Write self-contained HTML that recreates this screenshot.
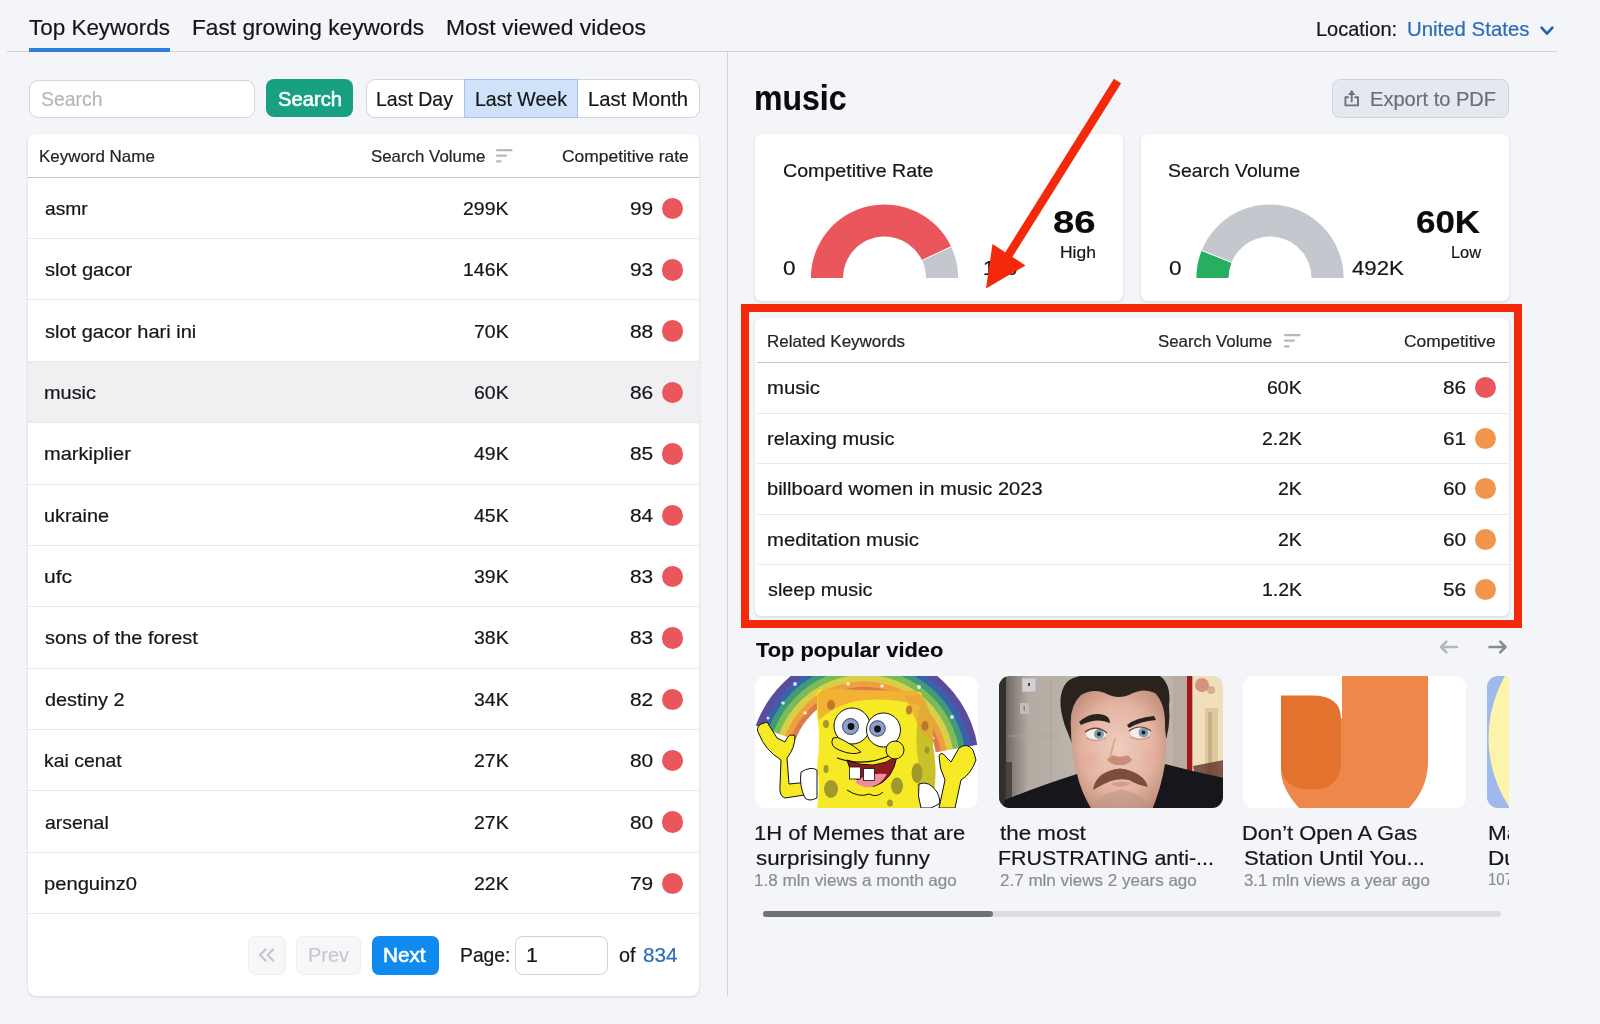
<!DOCTYPE html>
<html lang="en"><head><meta charset="utf-8"><title>Keyword Analytics</title>
<style>
html,body{margin:0;padding:0}
body{width:1600px;height:1024px;overflow:hidden;background:#f4f5f9;font-family:"Liberation Sans", sans-serif;position:relative}
#root{position:absolute;left:0;top:0;width:1600px;height:1024px;overflow:hidden}
#root>div,#root>svg,#root>span{position:absolute;box-sizing:border-box}
.t{white-space:pre;display:block;transform-origin:0 50%;-webkit-text-stroke:0.2px currentColor}
</style></head><body><div id="root">
<div style="left:7px;top:51px;width:1550px;height:1px;background:#cfd1d6"></div>
<div style="left:29px;top:48px;width:141px;height:4px;background:#2b7fd9"></div>
<span class="t" style="left:29.00px;top:13px;font-size:21.95px;line-height:29px;color:#15161a;transform:scaleX(1.0231);">Top Keywords</span>
<span class="t" style="left:191.97px;top:13px;font-size:21.95px;line-height:29px;color:#15161a;transform:scaleX(1.0342);">Fast growing keywords</span>
<span class="t" style="left:445.96px;top:13px;font-size:21.95px;line-height:29px;color:#15161a;transform:scaleX(1.0448);">Most viewed videos</span>
<span class="t" style="left:1316.49px;top:16px;font-size:19.85px;line-height:26px;color:#15161a;transform:scaleX(1.0061);">Location:</span>
<span class="t" style="left:1407.47px;top:16px;font-size:19.85px;line-height:26px;color:#2b6cb5;transform:scaleX(1.0278);">United States</span>
<svg style="left:1539px;top:23.800px" width="16" height="14" viewBox="0 0 16 14"><path d="M2.6 3.6 L8 9.6 L13.4 3.6" fill="none" stroke="#1f62b0" stroke-width="2.6" stroke-linecap="round" stroke-linejoin="round"/></svg>
<div style="left:727px;top:52px;width:1px;height:944px;background:#d4d6db"></div>
<div style="left:28.5px;top:79.5px;width:226px;height:38px;background:#fff;border:1px solid #d3d5da;border-radius:9px"></div>
<span class="t" style="left:41.00px;top:86px;font-size:19.85px;line-height:26px;color:#b4b6bc;transform:scaleX(0.9784);">Search</span>
<div style="left:266px;top:79.2px;width:86.5px;height:38.3px;background:#17a081;border-radius:8px"></div>
<span class="t" style="left:277.50px;top:86px;font-size:19.85px;line-height:26px;color:#fff;transform:scaleX(1.0188);-webkit-text-stroke:0.55px currentColor;">Search</span>
<div style="left:365.5px;top:79px;width:334px;height:38.5px;background:#fff;border:1px solid #d3d5da;border-radius:9px"></div>
<div style="left:464px;top:79px;width:114px;height:38.5px;background:#cfe2fa;border:1px solid #a4c3ee"></div>
<span class="t" style="left:376.02px;top:86px;font-size:19.85px;line-height:26px;color:#15161a;transform:scaleX(0.9821);">Last Day</span>
<span class="t" style="left:474.52px;top:86px;font-size:19.85px;line-height:26px;color:#15161a;transform:scaleX(0.9842);">Last Week</span>
<span class="t" style="left:588.48px;top:86px;font-size:19.85px;line-height:26px;color:#15161a;transform:scaleX(1.0194);">Last Month</span>
<div style="left:28px;top:134px;width:671.4px;height:862px;background:#fff;border-radius:6px 6px 8px 8px;box-shadow:0 1px 3px rgba(20,25,40,.12),0 0 1px rgba(20,25,40,.12)"></div>
<span class="t" style="left:38.99px;top:146px;font-size:16.72px;line-height:22px;color:#22242a;transform:scaleX(1.0142);">Keyword Name</span>
<span class="t" style="left:370.50px;top:146px;font-size:16.72px;line-height:22px;color:#22242a;transform:scaleX(1.0090);">Search Volume</span>
<span class="t" style="left:561.50px;top:146px;font-size:16.72px;line-height:22px;color:#22242a;transform:scaleX(1.0427);">Competitive rate</span>
<svg style="left:496px;top:149px" width="17" height="14" viewBox="0 0 17 14"><g fill="#b6b8c0"><rect x="0" y="0" width="16.5" height="2.2" rx="1"/><rect x="0" y="5.6" width="11" height="2.2" rx="1"/><rect x="0" y="11.2" width="5.5" height="2.2" rx="1"/></g></svg>
<div style="left:28px;top:176.5px;width:671.4px;height:1px;background:#c3c4c8"></div>
<div style="left:28px;top:238.1px;width:671.4px;height:1px;background:#e7e8eb"></div>
<span class="t" style="left:45.00px;top:197px;font-size:18.81px;line-height:24px;color:#15161a;transform:scaleX(1.0238);">asmr</span>
<span class="t" style="left:463.09px;top:197px;font-size:18.81px;line-height:24px;color:#15161a;transform:scaleX(1.0350);">299K</span>
<span class="t" style="left:629.80px;top:197px;font-size:18.81px;line-height:24px;color:#15161a;transform:scaleX(1.1100);">99</span>
<div style="left:661.5px;top:197.73px;width:21.5px;height:21.5px;background:#e9565c;border-radius:50%"></div>
<div style="left:28px;top:299.4px;width:671.4px;height:1px;background:#e7e8eb"></div>
<span class="t" style="left:45.00px;top:258px;font-size:18.81px;line-height:24px;color:#15161a;transform:scaleX(1.0710);">slot gacor</span>
<span class="t" style="left:463.09px;top:258px;font-size:18.81px;line-height:24px;color:#15161a;transform:scaleX(1.0350);">146K</span>
<span class="t" style="left:629.80px;top:258px;font-size:18.81px;line-height:24px;color:#15161a;transform:scaleX(1.1100);">93</span>
<div style="left:661.5px;top:259.09px;width:21.5px;height:21.5px;background:#e9565c;border-radius:50%"></div>
<div style="left:28px;top:360.8px;width:671.4px;height:1px;background:#e7e8eb"></div>
<span class="t" style="left:45.00px;top:320px;font-size:18.81px;line-height:24px;color:#15161a;transform:scaleX(1.0645);">slot gacor hari ini</span>
<span class="t" style="left:473.91px;top:320px;font-size:18.81px;line-height:24px;color:#15161a;transform:scaleX(1.0350);">70K</span>
<span class="t" style="left:629.80px;top:320px;font-size:18.81px;line-height:24px;color:#15161a;transform:scaleX(1.1100);">88</span>
<div style="left:661.5px;top:320.45px;width:21.5px;height:21.5px;background:#e9565c;border-radius:50%"></div>
<div style="left:28px;top:361.6px;width:671.4px;height:61.4px;background:#f0f0f3"></div>
<div style="left:28px;top:422.1px;width:671.4px;height:1px;background:#e7e8eb"></div>
<span class="t" style="left:43.94px;top:381px;font-size:18.81px;line-height:24px;color:#15161a;transform:scaleX(1.0590);">music</span>
<span class="t" style="left:473.91px;top:381px;font-size:18.81px;line-height:24px;color:#15161a;transform:scaleX(1.0350);">60K</span>
<span class="t" style="left:629.80px;top:381px;font-size:18.81px;line-height:24px;color:#15161a;transform:scaleX(1.1100);">86</span>
<div style="left:661.5px;top:381.81px;width:21.5px;height:21.5px;background:#e9565c;border-radius:50%"></div>
<div style="left:28px;top:483.5px;width:671.4px;height:1px;background:#e7e8eb"></div>
<span class="t" style="left:43.93px;top:442px;font-size:18.81px;line-height:24px;color:#15161a;transform:scaleX(1.0660);">markiplier</span>
<span class="t" style="left:473.91px;top:442px;font-size:18.81px;line-height:24px;color:#15161a;transform:scaleX(1.0350);">49K</span>
<span class="t" style="left:629.80px;top:442px;font-size:18.81px;line-height:24px;color:#15161a;transform:scaleX(1.1100);">85</span>
<div style="left:661.5px;top:443.17px;width:21.5px;height:21.5px;background:#e9565c;border-radius:50%"></div>
<div style="left:28px;top:544.9px;width:671.4px;height:1px;background:#e7e8eb"></div>
<span class="t" style="left:43.95px;top:504px;font-size:18.81px;line-height:24px;color:#15161a;transform:scaleX(1.0549);">ukraine</span>
<span class="t" style="left:473.91px;top:504px;font-size:18.81px;line-height:24px;color:#15161a;transform:scaleX(1.0350);">45K</span>
<span class="t" style="left:629.80px;top:504px;font-size:18.81px;line-height:24px;color:#15161a;transform:scaleX(1.1100);">84</span>
<div style="left:661.5px;top:504.53px;width:21.5px;height:21.5px;background:#e9565c;border-radius:50%"></div>
<div style="left:28px;top:606.2px;width:671.4px;height:1px;background:#e7e8eb"></div>
<span class="t" style="left:43.88px;top:565px;font-size:18.81px;line-height:24px;color:#15161a;transform:scaleX(1.1193);">ufc</span>
<span class="t" style="left:473.91px;top:565px;font-size:18.81px;line-height:24px;color:#15161a;transform:scaleX(1.0350);">39K</span>
<span class="t" style="left:629.80px;top:565px;font-size:18.81px;line-height:24px;color:#15161a;transform:scaleX(1.1100);">83</span>
<div style="left:661.5px;top:565.89px;width:21.5px;height:21.5px;background:#e9565c;border-radius:50%"></div>
<div style="left:28px;top:667.6px;width:671.4px;height:1px;background:#e7e8eb"></div>
<span class="t" style="left:45.00px;top:626px;font-size:18.81px;line-height:24px;color:#15161a;transform:scaleX(1.0589);">sons of the forest</span>
<span class="t" style="left:473.91px;top:626px;font-size:18.81px;line-height:24px;color:#15161a;transform:scaleX(1.0350);">38K</span>
<span class="t" style="left:629.80px;top:626px;font-size:18.81px;line-height:24px;color:#15161a;transform:scaleX(1.1100);">83</span>
<div style="left:661.5px;top:627.25px;width:21.5px;height:21.5px;background:#e9565c;border-radius:50%"></div>
<div style="left:28px;top:728.9px;width:671.4px;height:1px;background:#e7e8eb"></div>
<span class="t" style="left:45.00px;top:688px;font-size:18.81px;line-height:24px;color:#15161a;transform:scaleX(1.0564);">destiny 2</span>
<span class="t" style="left:473.91px;top:688px;font-size:18.81px;line-height:24px;color:#15161a;transform:scaleX(1.0350);">34K</span>
<span class="t" style="left:629.80px;top:688px;font-size:18.81px;line-height:24px;color:#15161a;transform:scaleX(1.1100);">82</span>
<div style="left:661.5px;top:688.61px;width:21.5px;height:21.5px;background:#e9565c;border-radius:50%"></div>
<div style="left:28px;top:790.3px;width:671.4px;height:1px;background:#e7e8eb"></div>
<span class="t" style="left:43.97px;top:749px;font-size:18.81px;line-height:24px;color:#15161a;transform:scaleX(1.0332);">kai cenat</span>
<span class="t" style="left:473.91px;top:749px;font-size:18.81px;line-height:24px;color:#15161a;transform:scaleX(1.0350);">27K</span>
<span class="t" style="left:629.80px;top:749px;font-size:18.81px;line-height:24px;color:#15161a;transform:scaleX(1.1100);">80</span>
<div style="left:661.5px;top:749.97px;width:21.5px;height:21.5px;background:#e9565c;border-radius:50%"></div>
<div style="left:28px;top:851.7px;width:671.4px;height:1px;background:#e7e8eb"></div>
<span class="t" style="left:45.00px;top:811px;font-size:18.81px;line-height:24px;color:#15161a;transform:scaleX(1.0335);">arsenal</span>
<span class="t" style="left:473.91px;top:811px;font-size:18.81px;line-height:24px;color:#15161a;transform:scaleX(1.0350);">27K</span>
<span class="t" style="left:629.80px;top:811px;font-size:18.81px;line-height:24px;color:#15161a;transform:scaleX(1.1100);">80</span>
<div style="left:661.5px;top:811.33px;width:21.5px;height:21.5px;background:#e9565c;border-radius:50%"></div>
<div style="left:28px;top:913.0px;width:671.4px;height:1px;background:#e7e8eb"></div>
<span class="t" style="left:43.93px;top:872px;font-size:18.81px;line-height:24px;color:#15161a;transform:scaleX(1.0727);">penguinz0</span>
<span class="t" style="left:473.91px;top:872px;font-size:18.81px;line-height:24px;color:#15161a;transform:scaleX(1.0350);">22K</span>
<span class="t" style="left:629.80px;top:872px;font-size:18.81px;line-height:24px;color:#15161a;transform:scaleX(1.1100);">79</span>
<div style="left:661.5px;top:872.69px;width:21.5px;height:21.5px;background:#e9565c;border-radius:50%"></div>
<div style="left:248px;top:936px;width:37.5px;height:38.5px;background:#f6f7f9;border:1px solid #eeeff2;border-radius:7px"></div>
<svg style="left:257px;top:947px" width="20" height="16" viewBox="0 0 20 16"><path d="M8.6 2.4 L3 8 L8.6 13.6 M16.2 2.4 L10.6 8 L16.2 13.6" fill="none" stroke="#c5c7cd" stroke-width="2.2" stroke-linecap="round" stroke-linejoin="round"/></svg>
<div style="left:296px;top:936px;width:65px;height:38.5px;background:#f6f7f9;border:1px solid #eeeff2;border-radius:7px"></div>
<span class="t" style="left:307.50px;top:942px;font-size:19.85px;line-height:26px;color:#c7c9ce;transform:scaleX(1.0030);">Prev</span>
<div style="left:372px;top:936px;width:66.5px;height:38.5px;background:#0f8bf0;border-radius:7px"></div>
<span class="t" style="left:382.96px;top:942px;font-size:19.85px;line-height:26px;color:#fff;transform:scaleX(1.0425);-webkit-text-stroke:0.55px currentColor;">Next</span>
<span class="t" style="left:459.53px;top:942px;font-size:19.85px;line-height:26px;color:#15161a;transform:scaleX(0.9728);">Page:</span>
<div style="left:515px;top:936px;width:92.5px;height:38.5px;background:#fff;border:1px solid #cfd1d6;border-radius:8px"></div>
<span class="t" style="left:525.92px;top:942px;font-size:19.85px;line-height:26px;color:#15161a;transform:scaleX(1.0800);">1</span>
<span class="t" style="left:619.00px;top:942px;font-size:19.85px;line-height:26px;color:#15161a;transform:scaleX(0.9979);">of</span>
<span class="t" style="left:642.50px;top:942px;font-size:19.85px;line-height:26px;color:#2b6cb5;transform:scaleX(1.0432);">834</span>
<span class="t" style="left:753.64px;top:76px;font-size:34.48px;line-height:45px;color:#0b0b0d;transform:scaleX(0.9287);font-weight:700;">music</span>
<div style="left:1332px;top:79px;width:176.5px;height:38.5px;background:#e6e8ef;border:1px solid #d1d4dc;border-radius:8px"></div>
<svg style="left:1343px;top:89px" width="18" height="19" viewBox="0 0 18 19"><g fill="none" stroke="#6d707b" stroke-width="1.9" stroke-linecap="round" stroke-linejoin="round"><path d="M5.2 8.2 H2.4 V16.4 H15 V8.2 H12.2"/><path d="M8.7 12.4 V2.4"/></g><path d="M4.9 6 L8.7 1.2 L12.5 6 Z" fill="#6d707b"/></svg>
<span class="t" style="left:1370.24px;top:86px;font-size:19.85px;line-height:26px;color:#6c6f7a;transform:scaleX(1.0122);">Export to PDF</span>
<div style="left:755px;top:134px;width:368px;height:166.5px;background:#fff;border-radius:6px;box-shadow:0 1px 3px rgba(20,25,40,.13),0 0 1px rgba(20,25,40,.10)"></div>
<span class="t" style="left:782.50px;top:159px;font-size:18.81px;line-height:24px;color:#15161a;transform:scaleX(1.0437);">Competitive Rate</span>
<svg style="left:0;top:0" width="1600" height="1024" viewBox="0 0 1600 1024"><path d="M810.90 278.00 A73.6 73.6 0 0 1 951.10 246.66 L922.05 260.33 A41.5 41.5 0 0 0 843.00 278.00 Z" fill="#e9575c"/><path d="M951.10 246.66 A73.6 73.6 0 0 1 958.10 278.00 L926.00 278.00 A41.5 41.5 0 0 0 922.05 260.33 Z" fill="#c5c7cf"/><path d="M952.00 246.24 L921.15 260.76" stroke="#fff" stroke-width="1"/></svg>
<span class="t" style="left:783.00px;top:254px;font-size:20.9px;line-height:27px;color:#15161a;transform:scaleX(1.0800);">0</span>
<span class="t" style="left:983.01px;top:254px;font-size:20.9px;line-height:27px;color:#15161a;transform:scaleX(0.9929);">100</span>
<span class="t" style="left:1052.80px;top:202px;font-size:31.87px;line-height:41px;color:#0b0b0d;transform:scaleX(1.2011);font-weight:700;">86</span>
<span class="t" style="left:1059.96px;top:242px;font-size:16.72px;line-height:22px;color:#15161a;transform:scaleX(1.0435);">High</span>
<div style="left:1140.5px;top:134px;width:368.5px;height:166.5px;background:#fff;border-radius:6px;box-shadow:0 1px 3px rgba(20,25,40,.13),0 0 1px rgba(20,25,40,.10)"></div>
<span class="t" style="left:1168.00px;top:159px;font-size:18.81px;line-height:24px;color:#15161a;transform:scaleX(1.0353);">Search Volume</span>
<svg style="left:0;top:0" width="1600" height="1024" viewBox="0 0 1600 1024"><path d="M1196.40 278.00 A73.6 73.6 0 0 1 1201.74 250.49 L1231.51 262.49 A41.5 41.5 0 0 0 1228.50 278.00 Z" fill="#27ae60"/><path d="M1201.74 250.49 A73.6 73.6 0 0 1 1343.60 278.00 L1311.50 278.00 A41.5 41.5 0 0 0 1231.51 262.49 Z" fill="#c5c7cf"/><path d="M1200.81 250.11 L1232.44 262.86" stroke="#fff" stroke-width="1"/></svg>
<span class="t" style="left:1169.00px;top:254px;font-size:20.9px;line-height:27px;color:#15161a;transform:scaleX(1.0800);">0</span>
<span class="t" style="left:1352.00px;top:254px;font-size:20.9px;line-height:27px;color:#15161a;transform:scaleX(1.0644);">492K</span>
<span class="t" style="left:1416.40px;top:202px;font-size:31.87px;line-height:41px;color:#0b0b0d;transform:scaleX(1.0968);font-weight:700;">60K</span>
<span class="t" style="left:1450.52px;top:242px;font-size:16.72px;line-height:22px;color:#15161a;transform:scaleX(0.9811);">Low</span>
<div style="left:755px;top:318px;width:753.8px;height:297.5px;background:#fff;border-radius:6px;box-shadow:0 1px 3px rgba(20,25,40,.13),0 0 1px rgba(20,25,40,.10)"></div>
<span class="t" style="left:766.91px;top:332px;font-size:15.67px;line-height:20px;color:#22242a;transform:scaleX(1.0854);">Related Keywords</span>
<span class="t" style="left:1158.00px;top:332px;font-size:15.67px;line-height:20px;color:#22242a;transform:scaleX(1.0754);">Search Volume</span>
<svg style="left:1284px;top:334px" width="17" height="14" viewBox="0 0 17 14"><g fill="#b6b8c0"><rect x="0" y="0" width="16.5" height="2.2" rx="1"/><rect x="0" y="5.6" width="11" height="2.2" rx="1"/><rect x="0" y="11.2" width="5.5" height="2.2" rx="1"/></g></svg>
<span class="t" style="left:1404.00px;top:332px;font-size:15.67px;line-height:20px;color:#22242a;transform:scaleX(1.1090);">Competitive</span>
<div style="left:756.5px;top:361.5px;width:751px;height:1px;background:#c3c4c8"></div>
<div style="left:756.5px;top:412.6px;width:751px;height:1px;background:#e7e8eb"></div>
<span class="t" style="left:766.92px;top:376px;font-size:18.81px;line-height:24px;color:#15161a;transform:scaleX(1.0800);">music</span>
<span class="t" style="left:1267.41px;top:376px;font-size:18.81px;line-height:24px;color:#15161a;transform:scaleX(1.0350);">60K</span>
<span class="t" style="left:1442.80px;top:376px;font-size:18.81px;line-height:24px;color:#15161a;transform:scaleX(1.1100);">86</span>
<div style="left:1475px;top:377.45px;width:21px;height:21px;background:#e9565c;border-radius:50%"></div>
<div style="left:756.5px;top:463.1px;width:751px;height:1px;background:#e7e8eb"></div>
<span class="t" style="left:766.94px;top:427px;font-size:18.81px;line-height:24px;color:#15161a;transform:scaleX(1.0612);">relaxing music</span>
<span class="t" style="left:1262.00px;top:427px;font-size:18.81px;line-height:24px;color:#15161a;transform:scaleX(1.0350);">2.2K</span>
<span class="t" style="left:1442.80px;top:427px;font-size:18.81px;line-height:24px;color:#15161a;transform:scaleX(1.1100);">61</span>
<div style="left:1475px;top:427.95px;width:21px;height:21px;background:#f0954b;border-radius:50%"></div>
<div style="left:756.5px;top:513.6px;width:751px;height:1px;background:#e7e8eb"></div>
<span class="t" style="left:766.93px;top:477px;font-size:18.81px;line-height:24px;color:#15161a;transform:scaleX(1.0677);">billboard women in music 2023</span>
<span class="t" style="left:1278.23px;top:477px;font-size:18.81px;line-height:24px;color:#15161a;transform:scaleX(1.0350);">2K</span>
<span class="t" style="left:1442.80px;top:477px;font-size:18.81px;line-height:24px;color:#15161a;transform:scaleX(1.1100);">60</span>
<div style="left:1475px;top:478.45px;width:21px;height:21px;background:#f0954b;border-radius:50%"></div>
<div style="left:756.5px;top:564.1px;width:751px;height:1px;background:#e7e8eb"></div>
<span class="t" style="left:766.92px;top:528px;font-size:18.81px;line-height:24px;color:#15161a;transform:scaleX(1.0778);">meditation music</span>
<span class="t" style="left:1278.23px;top:528px;font-size:18.81px;line-height:24px;color:#15161a;transform:scaleX(1.0350);">2K</span>
<span class="t" style="left:1442.80px;top:528px;font-size:18.81px;line-height:24px;color:#15161a;transform:scaleX(1.1100);">60</span>
<div style="left:1475px;top:528.95px;width:21px;height:21px;background:#f0954b;border-radius:50%"></div>
<span class="t" style="left:768.00px;top:578px;font-size:18.81px;line-height:24px;color:#15161a;transform:scaleX(1.0522);">sleep music</span>
<span class="t" style="left:1262.00px;top:578px;font-size:18.81px;line-height:24px;color:#15161a;transform:scaleX(1.0350);">1.2K</span>
<span class="t" style="left:1442.80px;top:578px;font-size:18.81px;line-height:24px;color:#15161a;transform:scaleX(1.1100);">56</span>
<div style="left:1475px;top:579.45px;width:21px;height:21px;background:#f0954b;border-radius:50%"></div>
<div style="left:740.5px;top:304.3px;width:781.5px;height:323.7px;border:8px solid #f4280b"></div>
<svg style="left:0;top:0" width="1600" height="1024" viewBox="0 0 1600 1024"><path d="M1117.5 81 L1008 256" stroke="#f4280b" stroke-width="8.5" fill="none"/><path d="M986 288.5 L992.5 244 L1025.5 265.5 Z" fill="#f4280b"/></svg>
<span class="t" style="left:755.50px;top:636px;font-size:20.9px;line-height:27px;color:#0b0b0d;transform:scaleX(1.0434);font-weight:700;">Top popular video</span>
<svg style="left:1438px;top:638px" width="72" height="18" viewBox="0 0 72 18"><g fill="none" stroke-width="2.6" stroke-linecap="round" stroke-linejoin="round"><path d="M19 9 H3 M8.300 3.700 L3 9 L8.300 14.300" stroke="#b3b6be"/><path d="M51.500 9 H67.500 M62.200 3.700 L67.500 9 L62.200 14.300" stroke="#888b94"/></g></svg>
<div style="left:755px;top:676px;width:223px;height:131.5px;overflow:hidden;border-radius:11px;background:#fff"><svg width="223" height="131.5" viewBox="0 0 223 131.5" style="display:block">
<rect width="223" height="132" fill="#fff"/>
<defs><clipPath id="rb"><path d="M109 89 L-13 44.500 L-13 -20 L237 -20 L237 66.400 Z"/></clipPath></defs>
<g clip-path="url(#rb)">
<circle cx="109" cy="89" r="111.5" fill="none" stroke="#5a4c9e" stroke-width="7.4"/>
<circle cx="109" cy="89" r="105" fill="none" stroke="#3763ad" stroke-width="6.6"/>
<circle cx="109" cy="89" r="99" fill="none" stroke="#3f9a76" stroke-width="6.2"/>
<circle cx="109" cy="89" r="93" fill="none" stroke="#7dbb55" stroke-width="6.2"/>
<circle cx="109" cy="89" r="87" fill="none" stroke="#d9cf45" stroke-width="6.2"/>
<circle cx="109" cy="89" r="81" fill="none" stroke="#f0a03a" stroke-width="6.2"/>
<circle cx="109" cy="89" r="75.5" fill="none" stroke="#d97b4a" stroke-width="5.5"/>
</g>
<g fill="#fff" opacity=".8"><circle cx="40" cy="8" r="2"/><circle cx="28" cy="27" r="1.8"/><circle cx="50" cy="37" r="1.8"/><circle cx="93" cy="8" r="1.8"/><circle cx="127" cy="10" r="1.8"/><circle cx="164" cy="11" r="2"/><circle cx="197" cy="41" r="2"/><circle cx="152" cy="29" r="1.8"/><circle cx="13" cy="42" r="1.5"/><circle cx="178" cy="62" r="1.6"/></g>
<path d="M166 18 Q180 40 178 70 Q184 100 176 132 L150 132 L150 18 Z" fill="#c9c12a"/>
<path d="M62 22 Q60 12 70 13 L160 16 Q170 14 166 26 Q158 60 164 90 Q160 115 166 132 L62 132 Q66 110 62 92 Q66 60 62 40 Z" fill="#f6ea26"/>
<path d="M62 20 Q66 10 80 13 L160 15 Q168 16 166 30 Q140 22 110 24 Q84 26 64 44 Z" fill="#f0a03a" opacity=".75"/>
<path d="M150 20 L166 18 Q180 40 178 66 L166 56 Z" fill="#e9a23a" opacity=".7"/>
<g fill="#a09a2e"><ellipse cx="76" cy="113" rx="7" ry="9"/><ellipse cx="142" cy="110" rx="6" ry="8.500"/><ellipse cx="162" cy="97" rx="5.500" ry="10"/><ellipse cx="71" cy="48" rx="3" ry="4"/><ellipse cx="71" cy="93" rx="2.500" ry="4"/><ellipse cx="135" cy="127" rx="3" ry="3.500"/><ellipse cx="172" cy="74" rx="2.500" ry="3.500"/></g>
<g fill="#b56a2a" opacity=".8"><ellipse cx="76" cy="29" rx="4" ry="5"/><ellipse cx="154" cy="34" rx="3" ry="4.500"/><ellipse cx="170" cy="50" rx="3.500" ry="5"/></g>
<circle cx="97" cy="50" r="18" fill="#fff" stroke="#111" stroke-width="1"/>
<circle cx="128.500" cy="54" r="17" fill="#fff" stroke="#111" stroke-width="1"/>
<circle cx="95.500" cy="50.500" r="8" fill="#8ba0cf" stroke="#222" stroke-width=".8"/><circle cx="96" cy="50.500" r="3.400" fill="#111"/>
<circle cx="122.500" cy="52.500" r="7.800" fill="#8ba0cf" stroke="#222" stroke-width=".8"/><circle cx="122.500" cy="53" r="3.400" fill="#111"/>
<path d="M92 84 Q120 96 142 80 Q138 104 120 110 Q100 112 92 84 Z" fill="#8e1b1b" stroke="#111" stroke-width="1"/>
<path d="M100 106 Q112 96 132 98 Q126 109 116 111 Q106 112 100 106 Z" fill="#f08c9e"/>
<rect x="94.500" y="91" width="11" height="12" fill="#fff" stroke="#111" stroke-width=".8"/><rect x="108.500" y="92.500" width="11" height="12" fill="#fff" stroke="#111" stroke-width=".8"/>
<path d="M78 62 Q74 70 84 74 Q98 80 106 76 Q100 70 88 64 Q82 60 78 62 Z" fill="#f6ea26" stroke="#111" stroke-width="1"/>
<path d="M82 82 Q110 92 138 78" fill="none" stroke="#111" stroke-width="1.200"/>
<circle cx="140" cy="74" r="9" fill="#f6ea26" stroke="#111" stroke-width="1"/>
<path d="M92 114 Q104 122 114 118 Q122 122 128 116" fill="none" stroke="#111" stroke-width="1"/>
<path d="M4 58 Q0 52 6 48 L12 46 L22 62 L30 66 Q34 56 40 60 Q40 72 32 82 L34 108 L54 106 L56 118 L30 122 Q24 120 25 110 L26 84 Q10 74 4 58 Z" fill="#f6ea26" stroke="#111" stroke-width="1"/>
<path d="M46 96 Q56 90 62 94 L62 122 Q54 126 50 122 Q44 110 46 96 Z" fill="#fff" stroke="#111" stroke-width="1"/>
<path d="M184 80 Q186 74 192 82 L196 86 L204 72 Q212 66 218 74 L221 84 Q216 98 206 104 L200 132 L184 132 L190 104 Q184 92 184 80 Z" fill="#f6ea26" stroke="#111" stroke-width="1"/>
<path d="M164 108 Q174 104 182 116 Q186 124 184 128 L176 132 L166 132 Q162 120 164 108 Z" fill="#fff" stroke="#111" stroke-width="1"/>
</svg></div>
<div style="left:999px;top:676px;width:223.5px;height:131.5px;overflow:hidden;border-radius:11px;background:#fff"><svg width="223.5" height="131.5" viewBox="0 0 223.5 131.5" style="display:block">
<defs><linearGradient id="wl" x1="0" x2="1"><stop offset="0" stop-color="#4a4540"/><stop offset=".05" stop-color="#7d756f"/><stop offset=".13" stop-color="#b3aaa2"/><stop offset=".5" stop-color="#c4bbb2"/><stop offset="1" stop-color="#b9aca3"/></linearGradient>
<radialGradient id="fc" cx=".5" cy=".48" r=".62"><stop offset="0" stop-color="#f0cdbe"/><stop offset=".6" stop-color="#e4b4a2"/><stop offset="1" stop-color="#bd8a76"/></radialGradient>
<filter id="bl" x="-5%" y="-5%" width="110%" height="110%"><feGaussianBlur stdDeviation=".7"/></filter>
<filter id="bl2" x="-20%" y="-20%" width="140%" height="140%"><feGaussianBlur stdDeviation="2.2"/></filter></defs>
<rect width="223" height="132" fill="url(#wl)"/>
<g filter="url(#bl)">
<rect x="-2" y="-2" width="9" height="136" fill="#332f2c"/>
<rect x="6" y="86" width="7" height="48" fill="#3a3532" opacity=".75"/>
<rect x="23" y="2" width="14" height="14" fill="#d2cfd0" stroke="#a9a5a2" stroke-width=".6"/><rect x="29" y="7" width="2" height="3" fill="#444"/>
<rect x="21" y="27" width="9" height="11" fill="#c2bcb7"/><rect x="24.500" y="30" width="1.500" height="5" fill="#8a847f"/>
<path d="M52 0 V132 M8 60 H60" stroke="#aaa199" stroke-width=".8" fill="none"/>
<rect x="174" y="-2" width="15" height="136" fill="#b9aba2"/>
<rect x="188" y="-2" width="5.500" height="106" fill="#a3191b"/>
<rect x="193.500" y="-2" width="32" height="136" fill="#efdfba"/>
<rect x="206" y="32" width="13" height="72" fill="#dcc89e"/><rect x="209" y="36" width="4" height="64" fill="#c9b085"/>
<circle cx="203" cy="9" r="7" fill="#cf7d76" opacity=".8"/><circle cx="212" cy="14" r="4" fill="#c98d6a" opacity=".6"/>
<path d="M194 90 L225 84 L225 106 L196 101 Z" fill="#5a2a22" opacity=".75"/>
<path d="M66 50 Q56 20 68 6 Q76 -3 112 -2 L158 -2 Q173 6 170 30 Q172 50 165 70 L74 70 Z" fill="#2b221e"/>
<path d="M72 52 Q70 30 82 19 Q94 12 106 17 Q118 24 130 19 Q144 11 156 17 Q167 28 166 52 Q170 80 162 104 Q158 122 154 134 L92 134 Q82 118 78 100 Q72 78 72 52 Z" fill="url(#fc)"/>
<path d="M94 134 Q100 116 122 114 Q144 116 152 134 Z" fill="#b99484" opacity=".55"/>
<ellipse cx="90" cy="84" rx="9" ry="8" fill="#e9a79a" opacity=".5" filter="url(#bl2)"/><ellipse cx="152" cy="82" rx="8" ry="8" fill="#e9a79a" opacity=".5" filter="url(#bl2)"/>
<path d="M80 46 Q92 35 105 39 Q111 41 111 47 Q98 41 82 49 Z" fill="#2b221e"/>
<path d="M128 49 Q136 42 155 40 L157 44 Q142 45 130 52 Z" fill="#2b221e"/>
<ellipse cx="97" cy="58" rx="10" ry="5.800" fill="#f3edeb"/><circle cx="100" cy="58" r="5" fill="#7f9fb0"/><circle cx="100" cy="58" r="2" fill="#1a1a1a"/>
<ellipse cx="141" cy="56.500" rx="10" ry="5.800" fill="#f3edeb"/><circle cx="144.500" cy="56.500" r="5" fill="#7f9fb0"/><circle cx="144.500" cy="56.500" r="2" fill="#1a1a1a"/>
<path d="M86 56 Q97 48 108 57" fill="none" stroke="#5f3e33" stroke-width="1.200"/><path d="M130 55 Q141 47 152 55" fill="none" stroke="#5f3e33" stroke-width="1.200"/>
<path d="M87 62 Q97 67 107 62" fill="none" stroke="#c99282" stroke-width="1"/><path d="M131 61 Q141 66 151 61" fill="none" stroke="#c99282" stroke-width="1"/>
<path d="M108 84 Q112 78 117 80 Q121 82 125 80 Q130 78 133 84 Q128 90 121 89 Q113 90 108 84 Z" fill="#c98c78"/>
<path d="M116 62 Q113 74 111 82" fill="none" stroke="#d6a08d" stroke-width="1.500"/>
<path d="M94 114 Q96 100 110 95 Q121 90 132 95 Q146 100 149 111 Q138 109 130 104 Q121 102 112 105 Q104 108 94 114 Z" fill="#7b4d3c"/>
<path d="M111 108 Q121 104 132 107 Q122 114 111 108 Z" fill="#d99a96"/>
<path d="M3 134 L6 124 Q40 110 78 98 Q82 116 93 134 Z" fill="#15151e"/>
<path d="M166 88 Q196 96 225 102 L225 134 L153 134 Q162 112 166 88 Z" fill="#15151e"/>
</g>
</svg></div>
<div style="left:1243px;top:676px;width:223px;height:131.5px;overflow:hidden;border-radius:11px;background:#fff"><svg width="223" height="131.5" viewBox="0 0 223 131.5" style="display:block">
<rect width="223" height="132" fill="#fff"/>
<path d="M99 0 H185 V85 Q185 112 166 132 H56 Q38 112 38 94 V42.500 H99 Z" fill="#f0874a"/>
<path d="M38 19.500 H69 Q98 19.500 98 43 V86 Q98 113.500 68 113.500 Q38 113.500 38 88 Z" fill="#e2722e"/>
</svg></div>
<div style="left:1487px;top:676px;width:22px;height:131.5px;overflow:hidden;border-radius:11px 0 0 11px;background:#9fb8ee"><svg width="22" height="131.5" viewBox="0 0 22 131.5" style="display:block"><circle cx="126.500" cy="62" r="125" fill="#fdf4ab"/></svg></div>
<span class="t" style="left:754.45px;top:819px;font-size:20.9px;line-height:27px;color:#15161a;transform:scaleX(1.0514);">1H of Memes that are</span>
<span class="t" style="left:755.50px;top:844px;font-size:20.9px;line-height:27px;color:#15161a;transform:scaleX(1.0698);">surprisingly funny</span>
<span class="t" style="left:754.48px;top:870px;font-size:16.72px;line-height:22px;color:#8a8d95;transform:scaleX(1.0208);">1.8 mln views a month ago</span>
<span class="t" style="left:999.50px;top:819px;font-size:20.9px;line-height:27px;color:#15161a;transform:scaleX(1.0708);">the most</span>
<span class="t" style="left:998.48px;top:844px;font-size:20.9px;line-height:27px;color:#15161a;transform:scaleX(1.0238);">FRUSTRATING anti-...</span>
<span class="t" style="left:999.50px;top:870px;font-size:16.72px;line-height:22px;color:#8a8d95;transform:scaleX(1.0191);">2.7 mln views 2 years ago</span>
<span class="t" style="left:1242.45px;top:819px;font-size:20.9px;line-height:27px;color:#15161a;transform:scaleX(1.0471);">Don&#8217;t Open A Gas</span>
<span class="t" style="left:1243.50px;top:844px;font-size:20.9px;line-height:27px;color:#15161a;transform:scaleX(1.0603);">Station Until You...</span>
<span class="t" style="left:1243.50px;top:870px;font-size:16.72px;line-height:22px;color:#8a8d95;transform:scaleX(1.0056);">3.1 mln views a year ago</span>
<div style="left:1487px;top:815px;width:22px;height:80px;overflow:hidden"><span class="t" style="position:absolute;left:0.500px;top:3.76px;font-size:20.9px;line-height:27px;color:#15161a;transform:scaleX(1.08);transform-origin:0 50%">Ma</span><span class="t" style="position:absolute;left:0.500px;top:29.26px;font-size:20.9px;line-height:27px;color:#15161a;transform:scaleX(1.08);transform-origin:0 50%">Du</span><span class="t" style="position:absolute;left:0.500px;top:54.21px;font-size:16.72px;line-height:22px;color:#8a8d95;transform:scaleX(0.9);transform-origin:0 50%">107</span></div>
<div style="left:762.5px;top:910.7px;width:738px;height:6.6px;background:#dcdde1;border-radius:4px"></div>
<div style="left:762.5px;top:910.7px;width:230px;height:6.6px;background:#6f7178;border-radius:4px"></div>
</div></body></html>
